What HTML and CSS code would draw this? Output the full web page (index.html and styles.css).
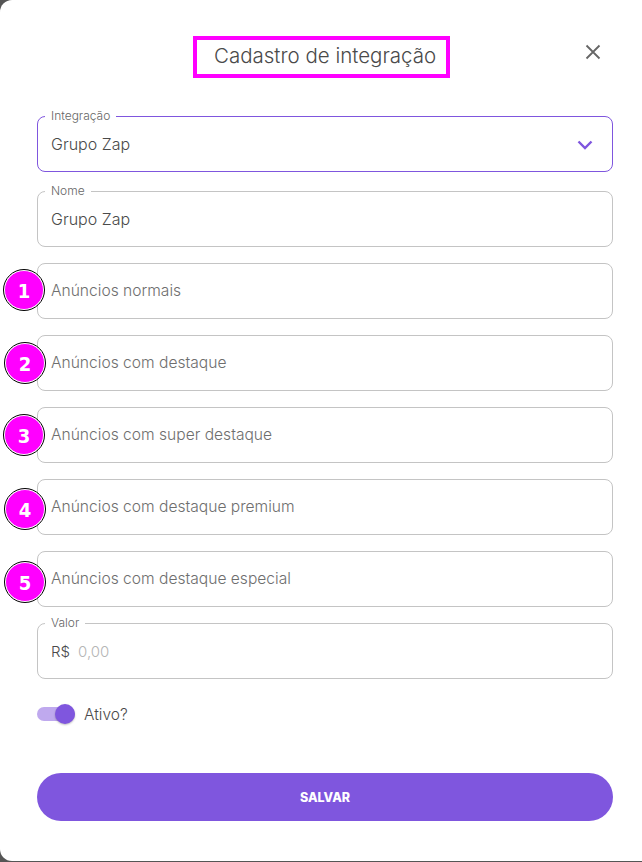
FILE: index.html

```html
<!DOCTYPE html>
<html>
<head>
  <title>Cadastro de integração</title>
  <meta charset="utf-8">
  <link rel="stylesheet" href="styles.css">
</head>
<body>
  <div class="modal">
    <div class="header">
      <h1 class="title">Cadastro de integração</h1>
      <button class="close-btn" aria-label="Fechar">
        <svg xmlns="http://www.w3.org/2000/svg" viewBox="0 0 16 16" fill="none" stroke="currentColor">
          <path stroke-width="1.8" d="M1.5 1.5l13 13M14.5 1.5l-13 13" />
        </svg>
      </button>
    </div>

    <div class="form">
      <div class="field field-active">
        <span class="field-label">Integração</span>
        <span class="field-value">Grupo Zap</span>
        <svg class="chevron" xmlns="http://www.w3.org/2000/svg" viewBox="0 0 16 10" fill="none" stroke="currentColor">
          <path stroke-width="2.4" d="M1.5 1.5L8 8l6.500-6.500" />
        </svg>
      </div>

      <div class="field">
        <span class="field-label">Nome</span>
        <span class="field-value">Grupo Zap</span>
      </div>

      <div class="field">
        <span class="badge badge-up">1</span>
        <span class="field-hint">Anúncios normais</span>
      </div>
      <div class="field">
        <span class="badge badge-right">2</span>
        <span class="field-hint">Anúncios com destaque</span>
      </div>
      <div class="field">
        <span class="badge">3</span>
        <span class="field-hint">Anúncios com super destaque</span>
      </div>
      <div class="field">
        <span class="badge badge-right badge-low">4</span>
        <span class="field-hint">Anúncios com destaque premium</span>
      </div>
      <div class="field">
        <span class="badge badge-right badge-lower">5</span>
        <span class="field-hint">Anúncios com destaque especial</span>
      </div>

      <div class="field">
        <span class="field-label">Valor</span>
        <span class="field-prefix">R$</span>
        <span class="field-empty">0,00</span>
      </div>
    </div>

    <div class="toggle-row">
      <div class="toggle">
        <span class="toggle-knob"></span>
      </div>
      <span class="toggle-label">Ativo?</span>
    </div>

    <button class="save-btn">SALVAR</button>
  </div>
</body>
</html>
```

FILE: styles.css

```css
body {
  font-family: Inter, "Open Sans", sans-serif;
  margin: 0;
  background-color: #555555;
}

.modal {
  width: 642px;
  height: 861px;
  box-sizing: border-box;
  padding: 36px 29px 0 37px;
  background-color: #ffffff;
  border-radius: 12px 0 0 12px;
}

.header {
  display: flex;
  justify-content: center;
  position: relative;
  height: 42px;
  margin-bottom: 38px;
}

.title {
  margin: 0 0 0 -7px;
  width: 257px;
  height: 42px;
  box-sizing: border-box;
  border: 4px solid #ff00ff;
  padding-left: 17px;
  font-size: 20.500px;
  font-weight: 300;
  line-height: 32px;
  color: #4a4a4a;
  white-space: nowrap;
}

.close-btn {
  position: absolute;
  top: 8px;
  right: 12px;
  width: 16px;
  height: 16px;
  padding: 0;
  border: none;
  background: none;
  color: #666666;
}

.close-btn svg {
  display: block;
  width: 16px;
  height: 16px;
}

.form {
  display: flex;
  flex-direction: column;
  gap: 16px;
}

.field {
  position: relative;
  display: flex;
  align-items: center;
  gap: 8px;
  height: 56px;
  box-sizing: border-box;
  padding: 0 13px;
  border: 1px solid #c4c4c4;
  border-radius: 8px;
}

.field-active {
  border-color: #7f56de;
  margin-bottom: 3px;
}

.field-label {
  position: absolute;
  top: -8px;
  left: 7px;
  padding: 0 6px;
  background-color: #ffffff;
  font-size: 12px;
  font-weight: 300;
  line-height: 14px;
  color: #666666;
}

.field-value {
  font-size: 16px;
  font-weight: 300;
  color: #4a4a4a;
}

.field-hint {
  margin-top: -2px;
  font-size: 15.600px;
  font-weight: 300;
  color: #6e6e6e;
}

.field-prefix {
  font-size: 15px;
  font-weight: 300;
  color: #4a4a4a;
}

.field-empty {
  font-size: 15px;
  font-weight: 300;
  color: #b5b5b5;
}

.chevron {
  position: absolute;
  top: 23px;
  right: 19px;
  width: 16px;
  height: 10px;
  color: #7f56de;
}

.badge {
  position: absolute;
  top: 7px;
  left: -34px;
  width: 38px;
  height: 36px;
  padding-top: 2px;
  border: 1px solid #ffffff;
  outline: 1px solid #000000;
  border-radius: 50%;
  background-color: #ff00ff;
  display: flex;
  align-items: center;
  justify-content: center;
  font-family: "DejaVu Sans", sans-serif;
  font-stretch: condensed;
  font-size: 20px;
  font-weight: 700;
  color: #ffffff;
}

.badge-up {
  top: 6px;
}

.badge-right {
  left: -33px;
}

.badge-low {
  top: 9px;
}

.badge-lower {
  top: 10px;
}

.toggle-row {
  display: flex;
  align-items: center;
  gap: 9px;
  height: 24px;
  margin-top: 23px;
}

.toggle {
  position: relative;
  width: 38px;
  height: 14px;
  border-radius: 7px;
  background-color: #bfa9ee;
}

.toggle-knob {
  position: absolute;
  top: -3px;
  right: 0;
  width: 20px;
  height: 20px;
  border-radius: 50%;
  background-color: #7f56de;
  box-shadow: 0 1px 2px rgba(0, 0, 0, 0.25);
}

.toggle-label {
  font-size: 15.500px;
  font-weight: 300;
  color: #4a4a4a;
}

.save-btn {
  display: block;
  width: 100%;
  height: 48px;
  margin-top: 47px;
  border: none;
  border-radius: 24px;
  background-color: #7f56de;
  font-family: inherit;
  font-size: 12.500px;
  font-weight: 800;
  color: #ffffff;
}
```
